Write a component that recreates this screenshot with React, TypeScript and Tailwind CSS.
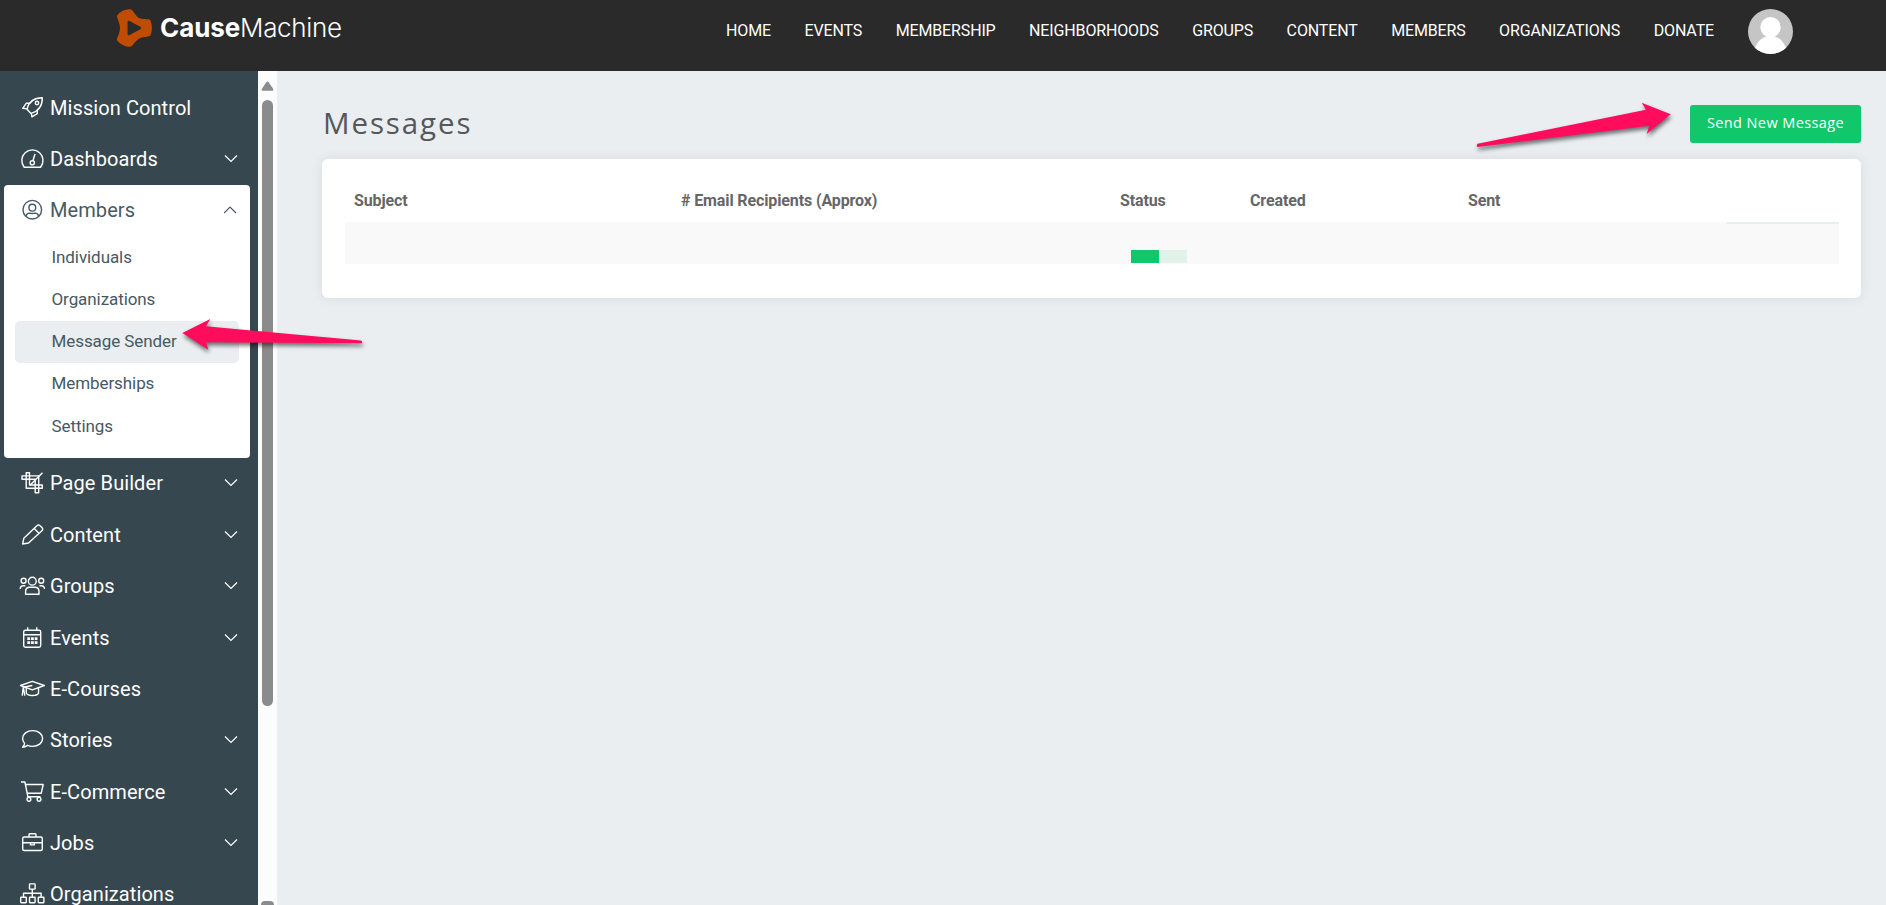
import { useState, type ReactNode } from "react";

type MenuItem = {
  label: string;
  icon: ReactNode;
  children?: string[];
  expandable?: boolean;
};

const navLinks = [
  "Home",
  "Events",
  "Membership",
  "Neighborhoods",
  "Groups",
  "Content",
  "Members",
  "Organizations",
  "Donate",
];

const menu: MenuItem[] = [
  {
    label: "Mission Control",
    icon: (
      <>
        <path d="M8 12.2C9.5 6 14 .9 23.3 .8C23.4 9.5 18.5 14.6 12 16.4Z" />
        <path d="M10.6 6.2H7.4L3.7 11.3L8.3 11.9M18.3 13.3V16.7L12.9 19.8L12.3 16" />
        <circle cx="18" cy="6" r="1.7" />
      </>
    ),
  },
  {
    label: "Dashboards",
    expandable: true,
    icon: (
      <>
        <path d="M5.2 19.2a10.6 10.6 0 1 1 16.4 0z" />
        <circle cx="13.3" cy="14.8" r="2.1" />
        <path d="M13.9 12.8L16 6" />
      </>
    ),
  },
  {
    label: "Members",
    expandable: true,
    children: ["Individuals", "Organizations", "Message Sender", "Memberships", "Settings"],
    icon: (
      <>
        <circle cx="13.3" cy="10.7" r="9.3" />
        <circle cx="13.3" cy="8.7" r="3.4" />
        <path d="M7 17.3c.3-2.3 1.8-3.2 3.5-3.2c1 .5 4.6 .5 5.6 0c1.7 0 3.2 .9 3.5 3.2" />
      </>
    ),
  },
  {
    label: "Page Builder",
    expandable: true,
    icon: (
      <>
        <path d="M7.2 .7h3.3V13h12.8v3.3H7.2Z" />
        <path d="M3 3.9h16.7v16.8h-3.5V7.2H3Z" />
        <path d="M23.5 .7L11 13.2" />
      </>
    ),
  },
  {
    label: "Content",
    expandable: true,
    icon: (
      <>
        <path d="M3.7 20l1.1-5.7L17.9 1.7a2.2 2.2 0 0 1 3.1 0l1.9 1.9a2.2 2.2 0 0 1 0 3.1L9.5 19Z" />
        <path d="M15.2 4.4l5 5" />
      </>
    ),
  },
  {
    label: "Groups",
    expandable: true,
    icon: (
      <>
        <circle cx="13.3" cy="6.2" r="3.9" />
        <circle cx="4.6" cy="5.8" r="2.5" />
        <circle cx="22.2" cy="5.8" r="2.5" />
        <path d="M6.6 19.2v-2.7c0-2.7 1.6-4.3 4.1-4.3h5.2c2.5 0 4.1 1.6 4.1 4.3v2.7Z" />
        <path d="M1.2 14c0-2 1.3-3.2 3.2-3.2h1.9M25.5 14c0-2-1.3-3.2-3.2-3.2h-1.9" />
      </>
    ),
  },
  {
    label: "Events",
    expandable: true,
    icon: (
      <>
        <rect x="4.7" y="3.3" width="17" height="17" rx="1.7" />
        <path d="M4.7 7.7h17M8.7 .3v3M17.7 .3v3" />
        <path d="M8.3 11.6h10.2M8.3 15.7h10.2" strokeWidth="2.8" strokeDasharray="2.8 .9" />
      </>
    ),
  },
  {
    label: "E-Courses",
    icon: (
      <>
        <path d="M1.5 7.5L13.3 3.3L25.3 7.5L13.3 11.8Z" />
        <path d="M13.3 7.5L4.3 9.2L3.2 17.6M4.3 9.2L5.8 17.6" />
        <path d="M7.3 10v5.3c1.5 2.9 10.5 2.9 12.2 0V10" />
      </>
    ),
  },
  {
    label: "Stories",
    expandable: true,
    icon: (
      <path d="M13.6 1.6c5.6 0 10 3.5 10 7.9s-4.4 7.9-10 7.9c-1.9 0-3.6-.4-5.1-1.1c-1.5 1.3-3.1 2-4.9 2c1.1-1.2 1.9-2.6 2-4.1c-1.3-1.3-2-2.9-2-4.7c0-4.4 4.4-7.9 10-7.9z" />
    ),
  },
  {
    label: "E-Commerce",
    expandable: true,
    icon: (
      <>
        <path d="M2 1H5.9L8.9 15.8H21.5" />
        <path d="M6.5 3.5H24.2L22.2 12.3H8.3" />
        <circle cx="9.9" cy="18.3" r="1.9" />
        <circle cx="20" cy="18.3" r="1.9" />
      </>
    ),
  },
  {
    label: "Jobs",
    expandable: true,
    icon: (
      <>
        <rect x="3.7" y="5" width="19.6" height="13.5" rx="1.5" />
        <path d="M10 5V2.6q0-.9.9-.9h5.2q.9 0 .9.9V5M3.7 10.7H23.3M11.5 10.7V12.9H15.3V10.7" />
      </>
    ),
  },
  {
    label: "Organizations",
    icon: (
      <>
        <rect x="10.5" y=".9" width="5.6" height="5.2" rx=".6" />
        <rect x="1.7" y="14.3" width="5.6" height="5.4" rx=".6" />
        <rect x="10.5" y="14.3" width="5.6" height="5.4" rx=".6" />
        <rect x="19.3" y="14.3" width="5.6" height="5.4" rx=".6" />
        <path d="M13.3 6.1v8.2M4.5 14.3V10.2H22.1V14.3" />
      </>
    ),
  },
];

const columns = [
  { label: "Subject", width: "w-[327px]" },
  { label: "# Email Recipients (Approx)", width: "w-[439px]" },
  { label: "Status", width: "w-[130px]" },
  { label: "Created", width: "w-[218px]" },
  { label: "Sent", width: "w-[258px]" },
];

function Chevron({ open }: { open: boolean }) {
  return (
    <svg viewBox="0 0 14 8" className="h-2 w-3.5" fill="none" stroke="currentColor" strokeWidth="1.2">
      {open ? <path d="M0 7l6-6l6 6" /> : <path d="M1 .5l6 6l6-6" />}
    </svg>
  );
}

function Logo() {
  return (
    <a href="#" className="flex items-start">
      <svg viewBox="78 24 112 120" className="mt-2 h-10 w-[37px]">
        <path
          fill="#bf4c00"
          fillRule="evenodd"
          d="M81 47C90 33 105 27 121 27C132 28 136 55 160 57C176 58 181 57 183 63C188 77 188 91 183 105C181 110 170 110 160 112C136 116 132 139 121 141C105 141 90 133 81 121C80 114 90 100 90 84C90 68 80 54 81 47ZM113 66V102Q113 108 119 105L152 88Q157 84 152 80L119 63Q113 60 113 66Z"
        />
      </svg>
      <span className="ml-[7px] mt-[10px] font-['Inter',sans-serif] text-[26px] leading-9 text-white">
        <span className="font-bold tracking-[-0.1px]">Cause</span>
        <span className="font-light tracking-[-0.35px]">Machine</span>
      </span>
    </a>
  );
}

function Header() {
  return (
    <header className="flex h-[71px] shrink-0 items-start justify-between bg-[#2a2a2a] pl-[116px] pr-[93px]">
      <Logo />
      <div className="flex items-start">
        <nav className="flex gap-[33.5px] pt-[19px]">
          {navLinks.map((link) => (
            <a key={link} href="#" className="text-base uppercase leading-6 tracking-[-0.14px] text-white">
              {link}
            </a>
          ))}
        </nav>
        <svg viewBox="0 0 45 45" className="ml-[34px] mt-[9px] size-[45px] rounded-full bg-[#c5c5c5]">
          <circle cx="22.5" cy="18.2" r="10.2" fill="#fff" />
          <path d="M6.5 40C10 31 15 27 22.5 27S35 31 38.5 40L32 45H13Z" fill="#fff" />
        </svg>
      </div>
    </header>
  );
}

function Sidebar() {
  const [open, setOpen] = useState("Members");
  const [active, setActive] = useState("Message Sender");

  return (
    <aside className="flex shrink-0">
      <div className="w-[258px] overflow-hidden bg-[#36474f] pl-1 pr-2 pt-[11px]">
        {menu.map((item) => {
          const isOpen = open === item.label && !!item.children;
          return (
            <div
              key={item.label}
              className={isOpen ? "rounded bg-white pb-[10px] text-[#455a64]" : "text-white"}
            >
              <button
                type="button"
                onClick={() => setOpen(isOpen ? "" : item.label)}
                className="flex h-[51.4px] w-full items-center pl-[15px] pr-3 text-left text-xl tracking-[0.08px]"
              >
                <svg
                  viewBox="0 0 26 22"
                  className="mr-[5px] h-[22px] w-[26px] shrink-0"
                  fill="none"
                  stroke="currentColor"
                  strokeWidth="1.4"
                  strokeLinejoin="round"
                >
                  {item.icon}
                </svg>
                <span className="flex-1">{item.label}</span>
                {item.expandable && <Chevron open={isOpen} />}
              </button>
              {isOpen && (
                <ul className="px-[11px]">
                  {item.children?.map((child) => (
                    <li key={child}>
                      <button
                        type="button"
                        onClick={() => setActive(child)}
                        className={[
                          "flex h-[42.3px] w-full items-center rounded-[5px] pl-[36.5px] text-[17px] tracking-[-0.08px]",
                          active === child ? "bg-[#eaeef1]" : "",
                        ].join(" ")}
                      >
                        {child}
                      </button>
                    </li>
                  ))}
                </ul>
              )}
            </div>
          );
        })}
      </div>
      <div className="flex w-[19px] flex-col items-center justify-between overflow-hidden bg-[#fcfcfc] pr-px pt-[10px] text-[#8b8b8b]">
        <div className="flex flex-col items-center">
          <svg viewBox="0 0 13 10" className="h-2.5 w-[13px]" fill="currentColor">
            <path d="M5.3 1.2Q6.5 0 7.7 1.2L12.2 8Q12.9 9.6 11.5 9.7H1.5Q.1 9.6 .8 8Z" />
          </svg>
          <div className="mt-[9px] h-[606px] w-[11px] rounded-full bg-[#8b8b8b]" />
        </div>
        <div className="h-1 w-[13px] rounded-t-sm bg-[#8b8b8b]" />
      </div>
    </aside>
  );
}

function MessagesPage() {
  return (
    <main className="flex-1 bg-[#eaeef1] pl-[45px] pr-[25px] pt-[34px]">
      <div className="flex items-start justify-between">
        <h1 className="-mt-0.5 ml-px font-['Open_Sans',sans-serif] text-[29.5px] leading-10 tracking-[1.9px] text-[#54585b]">
          Messages
        </h1>
        <button
          type="button"
          className="h-[38px] w-[171px] rounded-[3px] bg-[#12c76a] pb-[3px] font-['Open_Sans',sans-serif] text-[14.5px] font-medium tracking-[0.4px] text-white"
        >
          Send New Message
        </button>
      </div>

      <section className="mt-4 h-[139px] rounded-md bg-white pl-[23px] pr-[22px] pt-[26px] shadow-[0_0_12px_rgba(54,71,79,0.1)]">
        <div className="flex h-[37px] pl-[9px] pt-1 font-bold leading-6 tracking-[-0.12px] text-[#666]">
          {columns.map((col) => (
            <div key={col.label} className={`${col.width} shrink-0 whitespace-nowrap`}>
              {col.label}
            </div>
          ))}
          <div className="flex-1" />
        </div>
        <div className="flex h-[42px] items-end bg-[#f9f9f9] pl-[786px]">
          <div className="mb-px flex h-[13px] w-14 bg-[#e1f2ea]">
            <div className="w-1/2 bg-[#12c76a]" />
          </div>
          <div className="ml-auto h-full w-[113px] border-t-2 border-[#ebeef1]" />
        </div>
      </section>
    </main>
  );
}

// callout arrows laid over the page
function Arrows() {
  return (
    <svg
      viewBox="0 0 1886 905"
      className="pointer-events-none absolute left-0 top-0 h-[905px] w-[1886px] drop-shadow-[1px_3px_2px_rgba(0,0,0,0.55)]"
      fill="#ff0c5c"
    >
      <path d="M182.3 333L210.3 319L206 326.3L361 340.5Q363 342 361.5 343.3L206 342.3L208.3 349.7Z" />
      <path d="M1670.7 114.2L1641.7 102.7L1646 109.7L1477.5 143.7Q1476 145.5 1477.5 147L1649.3 125.7L1646.7 134Z" />
    </svg>
  );
}

export default function App() {
  return (
    <div className="relative flex h-[905px] w-[1886px] flex-col overflow-hidden font-['Roboto',sans-serif]">
      <Header />
      <div className="flex min-h-0 flex-1">
        <Sidebar />
        <MessagesPage />
      </div>
      <Arrows />
    </div>
  );
}
